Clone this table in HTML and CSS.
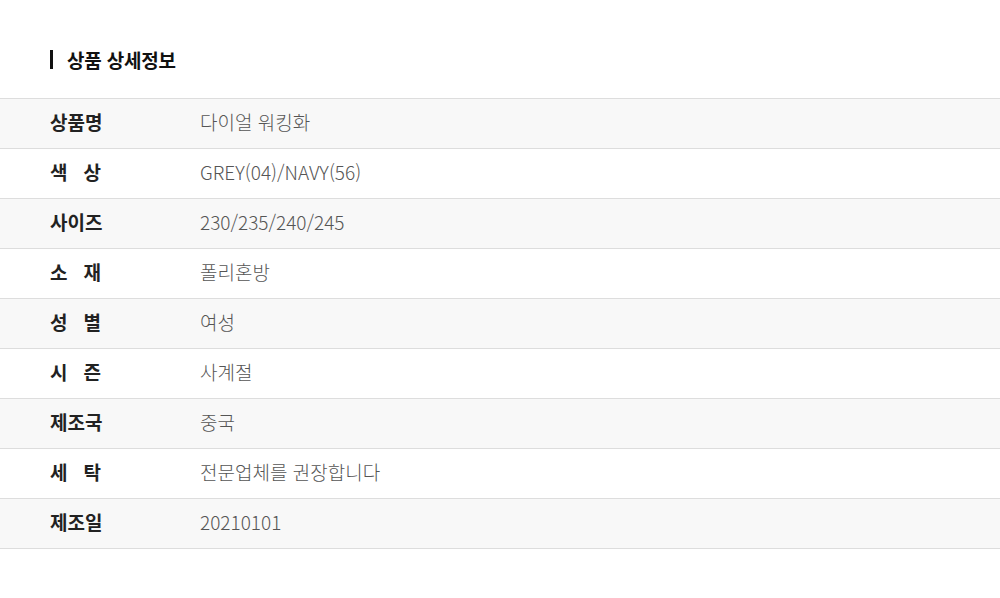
FILE: index.html
```html
<!DOCTYPE html>
<html lang="ko">
<head>
<meta charset="utf-8">
<link rel="stylesheet" href="styles.css">
</head>
<body>
<div class="page">
  <h2 class="title">상품 상세정보</h2>
  <div class="table">
    <div class="row alt"><div class="label"><span>상품명</span></div><div class="value">다이얼 워킹화</div></div>
    <div class="row"><div class="label spread"><span>색</span><span>상</span></div><div class="value">GREY(04)/NAVY(56)</div></div>
    <div class="row alt"><div class="label"><span>사이즈</span></div><div class="value">230/235/240/245</div></div>
    <div class="row"><div class="label spread"><span>소</span><span>재</span></div><div class="value">폴리혼방</div></div>
    <div class="row alt"><div class="label spread"><span>성</span><span>별</span></div><div class="value">여성</div></div>
    <div class="row"><div class="label spread"><span>시</span><span>즌</span></div><div class="value">사계절</div></div>
    <div class="row alt"><div class="label"><span>제조국</span></div><div class="value">중국</div></div>
    <div class="row"><div class="label spread"><span>세</span><span>탁</span></div><div class="value">전문업체를 권장합니다</div></div>
    <div class="row alt"><div class="label"><span>제조일</span></div><div class="value">20210101</div></div>
  </div>
</div>
</body>
</html>
```
FILE: styles.css
```css
* { box-sizing: border-box; }
html, body { margin: 0; padding: 0; background: #fff; }
body { font-family: "Noto Sans CJK KR", "Noto Sans", sans-serif; }
.page { padding-top: 50px; }
.title {
  margin: 0 0 29px 50px;
  padding-left: 14px;
  border-left: 3px solid #111;
  font-size: 19px;
  font-weight: 700;
  color: #111;
  line-height: 19px;
  height: 19px;
  display: flex;
  align-items: center;
  letter-spacing: -0.2px;
}
.table { border-top: 1px solid #ddd; }
.row {
  display: flex;
  align-items: center;
  height: 50px;
  border-bottom: 1px solid #ddd;
  padding-left: 50px;
  padding-bottom: 4px;
}
.row.alt { background: #f8f8f8; }
.label {
  width: 150px;
  font-size: 19px;
  font-weight: 700;
  color: #222;
  display: flex;
}
.label.spread span:first-child { margin-right: 16px; }
.value {
  font-size: 19px;
  font-weight: 300;
  color: #555;
  letter-spacing: 0;
}
```
